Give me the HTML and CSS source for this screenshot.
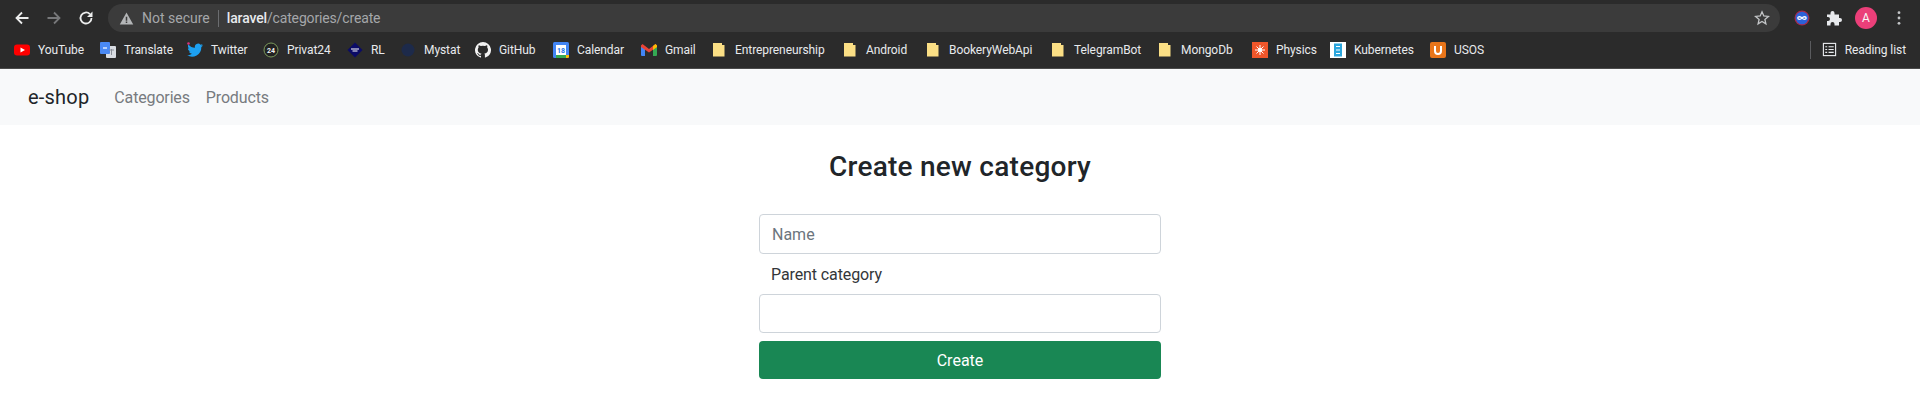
FILE: index.html

```html
<!DOCTYPE html>
<html>
<head>
  <title>Create new category</title>
  <link rel="stylesheet" href="styles.css">
</head>
<body>
  <div class="toolbar">
    <svg class="tool-icon" viewBox="0 0 16 16"><path d="M14.5 8H2.5M8 2.5 2.5 8 8 13.500" fill="none" stroke="#eceded" stroke-width="1.800"/></svg>
    <svg class="tool-icon" viewBox="0 0 16 16"><path d="M1.500 8h12M8 2.500 13.500 8 8 13.500" fill="none" stroke="#77787a" stroke-width="1.800"/></svg>
    <svg class="tool-icon tool-reload" viewBox="0 0 16 16"><path d="M13.500 8A5.500 5.500 0 1 1 11.900 4.100" fill="none" stroke="#eceded" stroke-width="1.800"/><path d="M14.500 1.500v5.500H9z" fill="#eceded"/></svg>
    <div class="omnibox">
      <svg class="warn" viewBox="0 0 16 16"><path d="M8 1.500 15.200 14.500H.8z" fill="#b4b6b8"/><path d="M7.200 6h1.600v4.500H7.200zM7.200 11.300h1.600v1.500H7.200z" fill="#3b3b3b"/></svg>
      <span class="not-secure">Not secure</span>
      <span class="url"><b>laravel</b>/categories/create</span>
      <svg class="star" viewBox="0 0 16 16"><path d="M8 1.800 9.800 6l4.600.4-3.500 3 1 4.500L8 11.500l-3.900 2.400 1-4.500-3.500-3L6.200 6z" fill="none" stroke="#c4c6c8" stroke-width="1.300"/></svg>
    </div>
    <div class="ext-icons">
      <svg class="ext" viewBox="0 0 16 16"><circle cx="8" cy="8" r="7.500" fill="#a52a4a"/><circle cx="8" cy="8" r="6.300" fill="#2b62d9"/><path d="M8 8C6.800 6.300 3.800 6.300 3.800 8s3 1.700 4.200 0 4.200-1.700 4.200 0-3 1.700-4.200 0z" fill="none" stroke="#fff" stroke-width="1.300"/></svg>
      <svg class="ext ext-puzzle" viewBox="0 0 16 16"><path d="M1 4.500h3.500V3a2 2 0 0 1 4 0v1.500H13V8h1a2 2 0 0 1 0 4h-1v3.500H8.500V14a2 2 0 0 0-4 0v1.500H1V11h1a2 2 0 0 0 0-4H1z" fill="#e8eaed"/></svg>
      <span class="avatar">A</span>
      <svg class="dots" viewBox="0 0 4 16"><circle cx="2" cy="2.700" r="1.400"/><circle cx="2" cy="8" r="1.400"/><circle cx="2" cy="13.300" r="1.400"/></svg>
    </div>
  </div>

  <div class="bookmarks">
    <a class="bm w-youtube"><svg viewBox="0 0 16 16"><rect y="2.500" width="16" height="11" rx="3" fill="#f00"/><path d="M6.500 5.500 11 8l-4.500 2.500z" fill="#fff"/></svg>YouTube</a>
    <a class="bm w-translate"><svg viewBox="0 0 16 16"><rect x="6" y="4" width="10" height="12" rx="1" fill="#d8dce2"/><rect width="10" height="12" rx="1" fill="#4a89f3"/><path d="M3 6h4" stroke="#fff" stroke-width="1.200"/><path d="M9 8h5M11.500 7v6" stroke="#8a8f98"/></svg>Translate</a>
    <a class="bm w-twitter"><svg viewBox="0 0 16 16"><path d="M16 3.300c-.6.300-1.200.4-1.900.5.700-.4 1.200-1 1.400-1.800-.6.400-1.300.7-2 .8A3.200 3.200 0 0 0 8 5.800C5.300 5.700 3 4.400 1.400 2.400c-.9 1.500-.4 3.400 1 4.300-.5 0-1-.2-1.500-.4 0 1.600 1.100 2.900 2.600 3.200-.5.100-1 .1-1.500 0 .4 1.300 1.600 2.200 3 2.300A6.500 6.500 0 0 1 0 13.100 9.200 9.200 0 0 0 14.300 5c.7-.4 1.300-1 1.700-1.700z" fill="#1da1f2"/><circle cx="1.500" cy="1.500" r="1.300" fill="#d8347a"/></svg>Twitter</a>
    <a class="bm w-privat"><svg viewBox="0 0 16 16"><circle cx="8" cy="8" r="7" fill="#222" stroke="#7c9a5c"/><text x="8" y="10.500" class="privat-num">24</text></svg>Privat24</a>
    <a class="bm w-rl"><svg viewBox="0 0 16 16"><path d="M8 .5 15.500 8 8 15.500.5 8z" fill="#0b0b66"/><path d="M4 7h8M5.500 9h5" stroke="#fff"/></svg>RL</a>
    <a class="bm w-mystat"><svg viewBox="0 0 16 16"><circle cx="8" cy="8" r="6.500" fill="#1d2a4a"/></svg>Mystat</a>
    <a class="bm w-github"><svg viewBox="0 0 16 16"><path d="M8 0a8 8 0 0 0-2.500 15.600c.4.100.5-.2.500-.4v-1.400c-2.200.5-2.700-1-2.700-1-.4-.9-.9-1.200-.9-1.200-.7-.5.100-.5.100-.5.800.1 1.200.8 1.200.8.700 1.200 1.900.9 2.300.7.100-.5.300-.9.500-1.100-1.800-.2-3.700-.9-3.700-4 0-.9.300-1.600.8-2.100-.1-.2-.4-1 .1-2.100 0 0 .7-.2 2.200.8a7.600 7.600 0 0 1 4 0c1.500-1 2.200-.8 2.200-.8.400 1.100.2 1.900.1 2.100.5.600.8 1.300.8 2.100 0 3.100-1.900 3.800-3.700 4 .3.300.6.800.6 1.500v2.200c0 .2.100.5.600.4A8 8 0 0 0 8 0z" fill="#f2f2f2"/></svg>GitHub</a>
    <a class="bm w-calendar"><svg viewBox="0 0 16 16"><rect width="16" height="16" rx="1.500" fill="#4285f4"/><rect x="3" y="3" width="10" height="10" fill="#fff"/><path d="M13 13h3v1.500a1.500 1.500 0 0 1-1.500 1.500H13z" fill="#fbbc04"/><path d="M3 13h10v3H3z" fill="#34a853"/><text x="8" y="11" class="cal-num">18</text></svg>Calendar</a>
    <a class="bm w-gmail"><svg viewBox="0 0 16 16"><path d="M0 3.500 4 6v8H1a1 1 0 0 1-1-1z" fill="#4285f4"/><path d="M16 3.500 12 6v8h3a1 1 0 0 0 1-1z" fill="#34a853"/><path d="M0 3.500 1.500 2 8 7l6.500-5L16 3.500V5L8 10.500 0 5z" fill="#ea4335"/><path d="M12 4v4l4-3V3.500L14.500 2z" fill="#fbbc04"/></svg>Gmail</a>
    <a class="bm bm-folder w-entre"><svg viewBox="0 0 16 16"><path class="folder" d="M0 1h9v2h2.500v11.500H0z"/></svg>Entrepreneurship</a>
    <a class="bm bm-folder w-android"><svg viewBox="0 0 16 16"><path class="folder" d="M0 1h9v2h2.500v11.500H0z"/></svg>Android</a>
    <a class="bm bm-folder w-bookery"><svg viewBox="0 0 16 16"><path class="folder" d="M0 1h9v2h2.500v11.500H0z"/></svg>BookeryWebApi</a>
    <a class="bm bm-folder w-telegram"><svg viewBox="0 0 16 16"><path class="folder" d="M0 1h9v2h2.500v11.500H0z"/></svg>TelegramBot</a>
    <a class="bm bm-folder w-mongo"><svg viewBox="0 0 16 16"><path class="folder" d="M0 1h9v2h2.500v11.500H0z"/></svg>MongoDb</a>
    <a class="bm w-physics"><svg viewBox="0 0 16 16"><rect width="16" height="16" fill="#f0562a"/><circle cx="8" cy="8" r="2" fill="#fff"/><path d="M8 3v10M3 8h10M4.500 4.500l7 7M11.500 4.500l-7 7" stroke="#fff"/></svg>Physics</a>
    <a class="bm w-kube"><svg viewBox="0 0 16 16"><rect width="16" height="16" fill="#fff"/><rect x="4" y="1.500" width="8" height="13" fill="#2aa5dc"/><path d="M6 4.500h4M6 8h4M6 11.500h4" stroke="#fff"/></svg>Kubernetes</a>
    <a class="bm w-usos"><svg viewBox="0 0 16 16"><rect width="16" height="16" rx="2" fill="#e8751a"/><path d="M5 4v5a3 3 0 0 0 6 0V4" fill="none" stroke="#fff" stroke-width="2"/></svg>USOS</a>
    <div class="reading">
      <svg viewBox="0 0 16 16"><rect x="1.500" y="1.500" width="13" height="13" fill="none" stroke="#e8eaed" stroke-width="1.200"/><path d="M3.500 5h2M7 5h5.500M3.500 8h2M7 8h5.500M3.500 11h2M7 11h5.500" stroke="#e8eaed" stroke-width="1.200"/></svg>
      Reading list
    </div>
  </div>

  <nav class="navbar">
    <a class="brand">e-shop</a>
    <a class="nav-link">Categories</a>
    <a class="nav-link">Products</a>
  </nav>

  <main class="content">
    <h1 class="title">Create new category</h1>
    <form class="form">
      <input class="field" type="text" placeholder="Name">
      <label class="field-label">Parent category</label>
      <div class="field field-select"></div>
      <button class="btn-create" type="button">Create</button>
    </form>
  </main>
</body>
</html>
```

FILE: styles.css

```css
* { box-sizing: border-box; }
body { margin: 0; background: #fff; font-family: Roboto, "Noto Sans", Arial, sans-serif; color: #212529; height: 414px; overflow: hidden; }
svg { display: block; flex: none; }

.toolbar { height: 34px; background: #2b2b2b; display: flex; align-items: center; padding: 0 0 0 14px; }
.tool-icon { width: 16px; height: 16px; margin-right: 16px; margin-top: 2px; }
.tool-reload { margin-right: 14px; }
.omnibox { flex: 1; height: 28px; margin-top: 2px; background: #3b3b3b; border-radius: 14px; display: flex; align-items: center; padding: 0 10px 0 11px; font-size: 14px; }
.warn { width: 15px; height: 15px; margin-right: 8px; }
.not-secure { color: #a5a7aa; padding-right: 8px; border-right: 1px solid #6b6d70; line-height: 17px; margin-right: 8px; }
.url { color: #a5a7aa; flex: 1; letter-spacing: -0.15px; }
.url b { color: #e8eaed; font-weight: 500; }
.star { width: 16px; height: 16px; }
.ext-icons { display: flex; align-items: center; width: 140px; padding-left: 14px; margin-top: 2px; }
.ext { width: 16px; height: 16px; margin-right: 16px; }
.ext-puzzle { margin-right: 13px; }
.avatar { width: 22px; height: 22px; border-radius: 50%; background: #eb3f79; color: #f7f7f7; font-size: 12px; display: flex; align-items: center; justify-content: center; margin-right: 20px; }
.dots { width: 4px; height: 16px; fill: #c4c6c8; }

.bookmarks { height: 35px; background: #2b2b2b; display: flex; align-items: center; padding: 0 0 3px 14px; border-bottom: 1px solid #4a4a4a; font-size: 12px; letter-spacing: -0.08px; color: #e8eaed; white-space: nowrap; }
.bm { display: flex; align-items: center; gap: 8px; flex: none; }
.bm-folder { gap: 6px; }
.bm svg { width: 16px; height: 16px; }
.w-youtube { width: 86px; }
.w-translate { width: 87px; }
.w-twitter { width: 76px; }
.w-privat { width: 84px; }
.w-rl { width: 53px; }
.w-mystat { width: 75px; }
.w-github { width: 78px; }
.w-calendar { width: 88px; }
.w-gmail { width: 72px; }
.w-entre { width: 131px; }
.w-android { width: 83px; }
.w-bookery { width: 125px; }
.w-telegram { width: 107px; }
.w-mongo { width: 93px; }
.w-physics { width: 78px; }
.w-kube { width: 100px; }
.w-usos { width: 60px; }
.folder { fill: #fbdf85; }
.privat-num { font-size: 7px; font-weight: 700; text-anchor: middle; fill: #f0f0f0; }
.cal-num { font-size: 7px; font-weight: 700; text-anchor: middle; fill: #1a73e8; }
.reading { margin-left: auto; margin-right: 14px; display: flex; align-items: center; gap: 8px; height: 18px; border-left: 1px solid #5a5b5e; padding-left: 11px; }
.reading svg { width: 15px; height: 15px; }

.navbar { height: 56px; background: #f8f9fa; display: flex; align-items: center; padding-left: 28px; }
.brand { font-size: 20px; letter-spacing: 0.2px; color: #212529; margin-right: 17px; }
.nav-link { font-size: 16px; letter-spacing: -0.15px; color: #777b7f; padding: 0 8px; }

.content { display: flex; flex-direction: column; align-items: center; }
.title { font-size: 28px; line-height: 34px; font-weight: 500; letter-spacing: 0.25px; margin: 25px 0 30px; }
.form { width: 402px; display: flex; flex-direction: column; }
.field { display: block; width: 100%; height: 40px; border: 1px solid #ced4da; border-radius: 4px; background: #fff; padding: 0 12px; font: inherit; font-size: 16px; outline: none; }
.field::placeholder { color: #6c757d; }
.field-label { font-size: 16px; letter-spacing: -0.1px; line-height: 24px; padding-left: 12px; margin: 9px 0 7px; color: #333639; }
.field-select { height: 39px; }
.btn-create { height: 38px; margin-top: 8px; border: none; border-radius: 4px; background: #198754; color: #fff; font: inherit; font-size: 16px; }
```
